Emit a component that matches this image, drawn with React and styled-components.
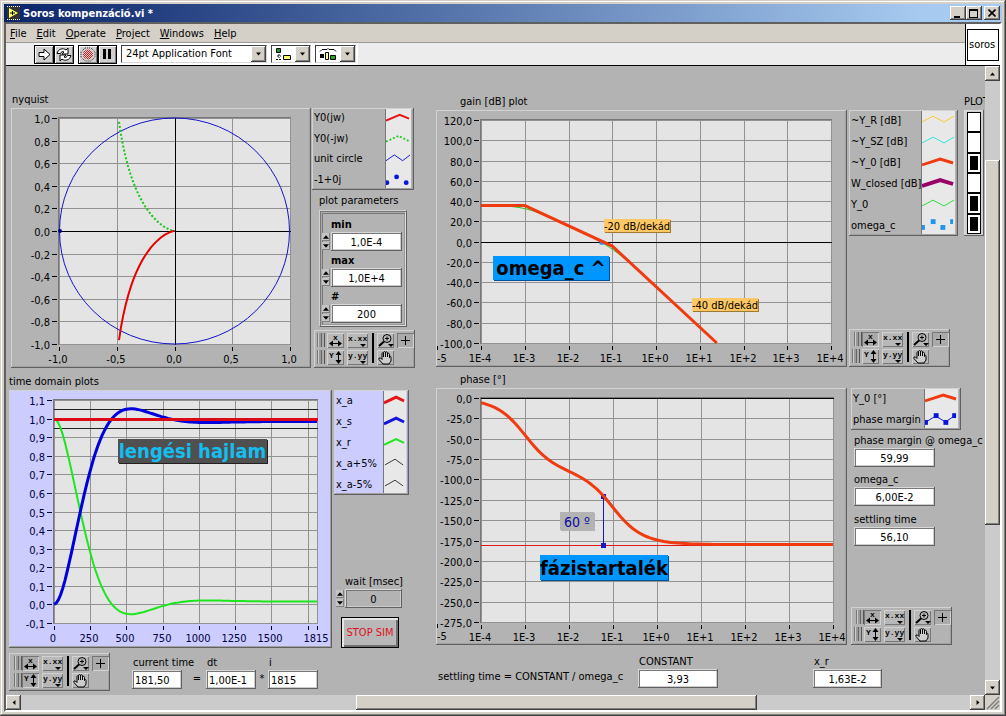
import React from "react";
import styled, { createGlobalStyle, css } from "styled-components";

const Global = createGlobalStyle`
  *, *::before, *::after { box-sizing: border-box; }
  body {
    margin: 0;
    background: #d4d0c8;
    font: 11px/14px "DejaVu Sans Condensed", "DejaVu Sans", sans-serif;
    color: #000;
  }
  button, input, select { font: inherit; color: inherit; margin: 0; padding: 0; border: 0; border-radius: 0; }
  svg { display: block; }
  svg text { font-family: "DejaVu Sans Condensed", "DejaVu Sans", sans-serif; }
`;

const raised = css`
  background: #d4d0c8;
  box-shadow: inset -1px -1px #404040, inset 1px 1px #fff, inset -2px -2px #808080;
`;
const panelBevel = css`
  box-shadow: inset -1px -1px #606060, inset 1px 1px #d2d2d2, inset -2px -2px #a0a0a0;
`;

/* ---------- window frame ---------- */

const Window = styled.div`
  min-height: 100vh;
  padding: 4px;
  display: flex;
  flex-direction: column;
  background: #d4d0c8;
  box-shadow: inset -1px -1px #404040, inset 1px 1px #d4d0c8, inset -2px -2px #808080, inset 2px 2px #fff;
`;
const TitleBar = styled.header`
  height: 18px;
  padding: 0 2px 0 3px;
  display: flex;
  align-items: center;
  gap: 3px;
  background: linear-gradient(90deg, #0a246a, #a6caf0 92%);
  color: #fff;
  font-weight: bold;
`;
const Title = styled.h1`
  flex: 1;
  margin: 0;
  padding-top: 1px;
  font: inherit;
`;
const CaptionButtons = styled.div`
  display: flex;
`;
const CaptionButton = styled.button`
  width: 16px;
  height: 14px;
  display: grid;
  place-items: center;
  margin-left: ${(p) => (p.$apart ? 2 : 0)}px;
  ${raised}
`;
const Client = styled.div`
  flex: 1;
  display: flex;
  flex-direction: column;
  border: 2px solid;
  border-color: #606060 #fff #fff #606060;
`;
const Head = styled.div`
  display: flex;
  border-bottom: 1px solid #000;
`;
const Bars = styled.div`
  flex: 1;
`;
const MenuBar = styled.nav`
  height: 19px;
  display: flex;
  align-items: flex-end;
  gap: 2px;
  border-bottom: 1px solid #9a9a9a;
`;
const MenuItem = styled.button`
  height: 17px;
  padding: 0 4px;
  background: none;
`;
const ToolBar = styled.div`
  height: 22px;
  display: flex;
  align-items: center;
  padding-left: 28px;
  gap: 4px;
  background: linear-gradient(90deg, #ececec 0 28px, #fff 28px 352px, #ececec 352px);
`;
const ToolGroup = styled.div`
  display: flex;
`;
const ToolButton = styled.button`
  width: ${(p) => p.$w || 20}px;
  height: 19px;
  display: grid;
  place-items: center;
  background: #d0d0d0;
  border: 1px solid #000;
  box-shadow: inset 1px 1px #fff, inset -1px -1px #808080;
`;
const DropFrame = styled.div`
  position: relative;
  width: ${(p) => p.$w}px;
  height: 18px;
  display: flex;
  align-items: center;
  background: #fff;
  border: 1px solid;
  border-color: #404040 #d8d8d8 #d8d8d8 #404040;
`;
const DropSelect = styled.select`
  flex: 1;
  min-width: 0;
  height: 16px;
  padding-left: 4px;
  appearance: none;
  background: none;
`;
const DropArrow = styled.span`
  width: 15px;
  height: 16px;
  display: grid;
  place-items: center;
  pointer-events: none;
  ${raised}
`;
const DropButton = styled.button`
  display: flex;
  align-items: center;
  justify-content: space-between;
  flex: 1;
  height: 16px;
  padding-left: 3px;
  background: none;
`;
const ViIconPane = styled.div`
  width: 35px;
  padding: 5px 1px 4px 1px;
  background: #fff;
  border-left: 1px solid #000;
`;
const ViIcon = styled.div`
  height: 32px;
  padding: 8px 1px 0;
  border: 1px solid #000;
`;

/* ---------- scroll bars ---------- */

const Work = styled.div`
  flex: 1;
  display: flex;
`;
const ScrollBar = styled.div`
  display: flex;
  background: #cbcbcb;
  flex-direction: ${(p) => (p.$vertical ? "column" : "row")};
  ${(p) => (p.$vertical ? "width: 15px;" : "flex: 1; height: 15px;")}
`;
const ScrollButton = styled.button`
  width: 15px;
  height: 15px;
  display: grid;
  place-items: center;
  ${raised}
`;
const Track = styled.div`
  flex: ${(p) => p.$part} 1 0;
`;
const Thumb = styled.div`
  flex: ${(p) => p.$part} 1 0;
  ${raised}
`;
const BottomBar = styled.div`
  display: flex;
`;
const Grip = styled.div`
  width: 15px;
  height: 15px;
`;

/* ---------- front panel ---------- */

const Panel = styled.main`
  flex: 1;
  min-width: 0;
  display: flex;
  background: #b3b3b3;
  overflow: hidden;
`;
const LeftHalf = styled.section`
  flex: 427 1 3px;
  min-width: 0;
  padding: 26px 0 0 3px;
`;
const RightHalf = styled.section`
  flex: 549 1 0;
  min-width: 0;
  padding-top: 28px;
`;
const GraphTitle = styled.h2`
  margin: ${(p) => p.$top || 0}px 0 0 ${(p) => p.$left || 0}px;
  font: inherit;
  height: 16px;
  line-height: 16px;
`;
const GraphRow = styled.div`
  display: flex;
  gap: ${(p) => p.$gap || 2}px;
  padding-left: ${(p) => p.$left || 0}px;
`;
const GraphBox = styled.div`
  flex: 1;
  min-width: 0;
  background: ${(p) => p.$bg || "transparent"};
  ${panelBevel}
  svg { width: 100%; height: auto; }
`;
const Side = styled.div`
  width: ${(p) => p.$w}px;
  display: flex;
  flex-direction: column;
  align-items: flex-start;
`;
const LegendBox = styled.ul`
  position: relative;
  width: ${(p) => p.$w}px;
  height: ${(p) => p.$h}px;
  margin: 0;
  padding: 0 3px 0 2px;
  display: flex;
  flex-direction: column;
  list-style: none;
  background: ${(p) => p.$bg || "transparent"};
  &::after {
    content: "";
    position: absolute;
    inset: 0;
    ${panelBevel}
  }
`;
const LegendRow = styled.li`
  flex: 1;
  display: flex;
  align-items: center;
  justify-content: space-between;
  white-space: nowrap;
`;
const Swatch = styled.svg`
  flex: none;
  align-self: stretch;
  background: #e8e8e8;
  border-left: 1px solid #777;
`;

const Field = styled.input`
  width: ${(p) => p.$w}px;
  height: 19px;
  min-width: 0;
  padding: 1px 3px 0;
  text-align: ${(p) => p.$align || "center"};
  background: ${(p) => p.$bg || "#fff"};
  box-shadow: inset -1px -1px #606060, inset 1px 1px #d8d8d8, inset 2px 2px #777, inset -2px -2px #ccc;
`;
const Labelled = styled.label`
  display: flex;
  flex-direction: column;
  white-space: nowrap;
  margin: ${(p) => p.$top || 0}px 0 0 ${(p) => p.$left || 0}px;
`;
const Caption = styled.span`
  height: 14px;
  padding-left: ${(p) => p.$left || 0}px;
  font-weight: ${(p) => (p.$bold ? "bold" : "normal")};
`;
const SpinRow = styled.div`
  display: flex;
  align-items: center;
  gap: 1px;
`;
const Spinner = styled.span`
  width: 8px;
  display: flex;
  flex-direction: column;
  gap: 1px;
`;
const SpinButton = styled.button`
  height: 8px;
  display: grid;
  place-items: center;
  background: #c4c4c4;
  box-shadow: inset -1px -1px #808080;
`;
const Cluster = styled.fieldset`
  width: 88px;
  min-width: 0;
  margin: 2px 0 0 7px;
  padding: 4px 2px 3px;
  border: 1px solid;
  border-color: #d2d2d2 #606060 #606060 #d2d2d2;
  box-shadow: inset 1px 1px #777, inset -1px -1px #ddd, inset 2px 2px #aaa, inset 3px 3px #777, inset -2px -2px #999;
`;
const ClusterItem = styled.label`
  display: flex;
  flex-direction: column;
  margin-top: 3px;
`;
const StopButton = styled.button`
  width: 58px;
  height: 31px;
  margin: 9px 0 0 7px;
  color: #e01020;
  background: #b8b8b8;
  border: 1px solid #000;
  white-space: nowrap;
  box-shadow: inset 2px 2px #e4e4e4, inset -2px -2px #707070;
`;
const PaletteBox = styled.div`
  width: 101px;
  height: 38px;
  margin-top: ${(p) => (p.$bottom ? "auto" : 0)};
  margin-left: ${(p) => p.$left || 0}px;
  padding: 3px;
  display: grid;
  grid-template-columns: 27px 22px 2px 17px 17px;
  grid-template-rows: 15px 15px;
  column-gap: 3px;
  row-gap: 2px;
  ${panelBevel}
`;
const LockPair = styled.div`
  display: flex;
  justify-content: ${(p) => (p.$locked ? "flex-end" : "space-between")};
`;
const PaletteButton = styled.button`
  width: ${(p) => p.$w || 17}px;
  height: 15px;
  grid-column: ${(p) => p.$col || "auto"};
  background: ${(p) => (p.$down ? "#aaa" : "#b8b8b8")};
  box-shadow: ${(p) =>
    p.$down
      ? "inset 1px 1px #777, inset -1px -1px #d2d2d2"
      : "inset 1px 1px #d2d2d2, inset -1px -1px #777"};
`;
const Lock = styled.button`
  width: 8px;
  height: 14px;
  background: linear-gradient(90deg, #777 0 1px, #ccc 1px 2px, #999 2px 4px, #666 4px 5px, #aaa 5px 7px, #555 7px);
`;
const Divider = styled.div`
  grid-row: 1 / 3;
  grid-column: 3;
  height: 30px;
  background: #000;
`;
const BottomRow = styled.div`
  display: flex;
  align-items: flex-start;
  padding-top: ${(p) => p.$top}px;
`;
const Sign = styled.span`
  width: ${(p) => p.$w}px;
  padding-top: 19px;
  text-align: center;
`;
const Formula = styled.p`
  width: 200px;
  margin: 0;
  padding: 15px 0 0 2px;
  white-space: nowrap;
`;
const PlotSwitches = styled.div`
  width: 20px;
  height: 126px;
  margin-left: 6px;
  padding: 2px 3px 2px;
  display: grid;
  grid-auto-rows: 1fr;
  background: #d0d0d0;
  box-shadow: inset -1px -1px #606060, inset 1px 1px #ddd;
`;
const PlotSwitch = styled.input`
  appearance: none;
  width: 14px;
  background: #fff;
  border: 1px solid #000;
  &:checked {
    background: #000;
    box-shadow: inset 0 0 0 2px #fff;
  }
`;
const SideTop = styled.div`
  display: flex;
`;
const SwitchHead = styled.div`
  position: relative;
`;
const SwitchTitle = styled.span`
  position: absolute;
  left: 6px;
  bottom: 100%;
  padding-bottom: 1px;
`;

/* ---------- plotting ---------- */

function Plot({ size, area, x, y, xTicks, yTicks, ink = "#000", zeroX, zeroY, extra, title, children }) {
  const sx = (v) => area.l + ((v - x[0]) / (x[1] - x[0])) * (area.r - area.l);
  const sy = (v) => area.b - ((v - y[0]) / (y[1] - y[0])) * (area.b - area.t);
  const px = (v) => Math.round(sx(v));
  const py = (v) => Math.round(sy(v));
  return (
    <svg viewBox={`0 0 ${size[0]} ${size[1]}`} role="img" aria-label={title}>
      <g shapeRendering="crispEdges">
        <rect x={area.l} y={area.t} width={area.r - area.l + 1} height={area.b - area.t + 1} fill="#e4e4e4" />
        <rect x={area.l - 1} y={area.t - 1} width={area.r - area.l + 2} height="1" fill="#777" />
        <rect x={area.l - 1} y={area.t - 1} width="1" height={area.b - area.t + 2} fill="#777" />
        {xTicks.map(([v]) => (
          <g key={v}>
            <rect x={px(v)} y={area.t} width="1" height={area.b - area.t + 1} fill="#929292" />
            <rect x={px(v)} y={area.b + 3} width="1" height="4" fill={ink} />
          </g>
        ))}
        {yTicks.map(([v]) => (
          <g key={v}>
            <rect x={area.l} y={py(v)} width={area.r - area.l + 1} height="1" fill="#929292" />
            <rect x={area.l - 7} y={py(v)} width="5" height="1" fill={ink} />
          </g>
        ))}
        {zeroX && <rect x={px(0)} y={area.t} width="1" height={area.b - area.t + 1} fill="#000" />}
        {zeroY && <rect x={area.l} y={py(0)} width={area.r - area.l + 1} height="1" fill="#000" />}
      </g>
      <g fontSize="11" fill={ink}>
        {xTicks.map(([v, t]) => (
          <text key={v} x={px(v) - 1} y={area.b + 19} textAnchor="middle">{t}</text>
        ))}
        {yTicks.map(([v, t]) => (
          <text key={v} x={area.l - 9} y={py(v) + 5} textAnchor="end">{t}</text>
        ))}
        {extra}
      </g>
      {children(sx, sy)}
    </svg>
  );
}

const comma = (v, d = 1) => v.toFixed(d).replace(".", ",");
const range = (from, to, n) => Array.from({ length: n + 1 }, (_, i) => from + ((to - from) * i) / n);
const line = (values, fx, fy) => values.map((v) => `${fx(v).toFixed(1)},${fy(v).toFixed(1)}`).join(" ");

const K = 60;
const W1 = 0.001;
const W2 = 0.1;
const WC = 0.06;

const decades = (...labels) => labels.map((n) => [n, `1E${n < 0 ? "-" : "+"}${Math.abs(n)}`]);
const logTicks = decades(-4, -3, -2, -1, 0, 1, 2, 3, 4);

function Nyquist() {
  const ws = range(-1.34, 2, 90).map((e) => 10 ** e);
  const re = (w) => -(WC / W2) / (1 + (w / W2) ** 2);
  const im = (w) => -WC / (w * (1 + (w / W2) ** 2));
  const shown = ws.filter((w) => im(w) > -1.01);
  return (
    <Plot
      title="nyquist"
      size={[300, 260]}
      area={{ l: 48, r: 279, t: 10, b: 236 }}
      x={[-1, 1]}
      y={[-1, 1]}
      xTicks={[-1, -0.5, 0, 0.5, 1].map((v) => [v, comma(v)])}
      yTicks={range(-10, 10, 10).map((v) => [v / 10, comma(v / 10)])}
      zeroX
      zeroY
    >
      {(sx, sy) => (
        <g fill="none">
          <ellipse cx={sx(0)} cy={sy(0)} rx="115" ry="113" stroke="#1414c8" />
          <circle cx={sx(-1) + 1} cy={sy(0)} r="2" fill="#00008b" />
          <polyline points={line(shown, (w) => sx(re(w)), (w) => sy(-im(w)))} stroke="#14c814" strokeWidth="2" strokeDasharray="2 2" />
          <polyline points={line(shown, (w) => sx(re(w)), (w) => sy(im(w)))} stroke="#e60000" strokeWidth="2" />
        </g>
      )}
    </Plot>
  );
}

function Note({ x, y, w, h, fill, edge, color = "#000", size, bold, base, children }) {
  return (
    <g>
      <rect x={x + 1} y={y + 1} width={w} height={h} fill={edge} />
      <rect x={x} y={y} width={w} height={h} fill={fill} />
      <text x={x + w / 2} y={y + base} textAnchor="middle" fontSize={size} fontWeight={bold ? "bold" : "normal"} fill={color}>
        {children}
      </text>
    </g>
  );
}

const minusFive = (
  <>
    <rect x="1" y="236" width="1" height="4" />
    <text x="1" y="252">-5</text>
  </>
);

function Gain() {
  const asym = [[-4, 35.6], [-3, 35.6], [-1, -4.4], [1.39, -100]];
  const exact = (e) => 20 * Math.log10(K / Math.hypot(1, 10 ** e / W1) / Math.hypot(1, 10 ** e / W2));
  return (
    <Plot
      title="gain [dB] plot"
      size={[411, 257]}
      area={{ l: 45, r: 395, t: 10, b: 233 }}
      x={[-4, 4]}
      y={[-100, 120]}
      xTicks={logTicks}
      yTicks={range(-100, 120, 11).map((v) => [v, comma(v)])}
      zeroY
      extra={minusFive}
    >
      {(sx, sy) => (
        <>
          <polyline fill="none" stroke="#22c822" points={line(range(-4, 1.35, 60), sx, (e) => sy(exact(e)))} />
          <rect x={sx(Math.log10(WC)) - 3} y={sy(0) - 1} width="5" height="4" fill="#1e90ff" />
          <polyline fill="none" stroke="#f03a10" strokeWidth="3" points={line(asym, (p) => sx(p[0]), (p) => sy(p[1]))} />
          <Note x={168} y={109} w={66} h={13} base={11} fill="#ffc864" edge="#a07830" size="11">-20 dB/dekád</Note>
          <Note x={256} y={188} w={66} h={13} base={11} fill="#ffc864" edge="#a07830" size="11">-40 dB/dekád</Note>
          <Note x={57} y={146} w={116} h={24} base={19} fill="#0096ff" edge="#0050a0" size="20" bold>omega_c ^</Note>
        </>
      )}
    </Plot>
  );
}

function Phase() {
  const deg = 180 / Math.PI;
  const phase = (e) => -deg * (Math.atan(10 ** e / W1) + Math.atan(10 ** e / W2));
  return (
    <Plot
      title="phase [°]"
      size={[411, 257]}
      area={{ l: 45, r: 397, t: 10, b: 234 }}
      x={[-4, 4]}
      y={[-275, 0]}
      xTicks={logTicks}
      yTicks={range(-275, 0, 11).map((v) => [v, comma(v)])}
      zeroY
      extra={minusFive}
    >
      {(sx, sy) => {
        const xm = Math.round(sx(Math.log10(WC)));
        return (
          <>
            <rect x={sx(-4)} y={Math.round(sy(-180))} width={sx(4) - sx(-4)} height="1" fill="#e61414" />
            <rect x={xm} y={sy(-120)} width="1" height={sy(-180) - sy(-120)} fill="#1414c8" />
            <rect x={xm - 2} y={Math.round(sy(-120)) - 2} width="5" height="5" fill="#1414c8" />
            <polyline fill="none" stroke="#f03a10" strokeWidth="3" points={line(range(-4, 4, 100), sx, (e) => sy(phase(e)))} />
            <rect x={xm - 2} y={Math.round(sy(-180)) - 2} width="5" height="5" fill="#1414c8" />
            <Note x={124} y={124} w={34} h={18} base={15} fill="#b3b3b3" edge="#b3b3b3" color="#0a0aa0" size="14">60 º</Note>
            <Note x={104} y={167} w={128} h={25} base={20} fill="#0096ff" edge="#0050a0" size="20" bold>fázistartalék</Note>
          </>
        );
      }}
    </Plot>
  );
}

function TimeDomain() {
  const wn = Math.sqrt(WC * W2);
  const z = W2 / 2 / wn;
  const wd = wn * Math.sqrt(1 - z * z);
  const out = (i) => {
    const t = i / 10;
    return (K / (K + 1)) * (1 - Math.exp(-z * wn * t) * (Math.cos(wd * t) + ((z * wn) / wd) * Math.sin(wd * t)));
  };
  const is = range(0, 1815, 120);
  return (
    <Plot
      title="time domain plots"
      ink="#000040"
      size={[323, 258]}
      area={{ l: 45, r: 308, t: 10, b: 233 }}
      x={[0, 1815]}
      y={[-0.1, 1.1]}
      xTicks={[[0, "0"], [250, "250"], [500, "500"], [750, "750"], [1000, "1000"], [1250, "1250"], [1500, "1500"], [1750, ""], [1815, "1815"]]}
      yTicks={range(-1, 11, 12).map((v) => [v / 10, comma(v / 10)])}
    >
      {(sx, sy) => (
        <g fill="none">
          <rect x="45" y={Math.round(sy(1.05))} width="264" height="1" fill="#222" />
          <rect x="45" y={Math.round(sy(0.95))} width="264" height="1" fill="#222" />
          <polyline stroke="#1ee61e" strokeWidth="2" points={line(is, sx, (i) => sy(1 - out(i)))} />
          <polyline stroke="#0000dc" strokeWidth="3" points={line(is, sx, (i) => sy(out(i)))} />
          <rect x="45" y={Math.round(sy(1)) - 1} width="264" height="3" fill="#dc0a14" />
          <Note x={109} y={49} w={149} h={24} base={19} fill="#505050" edge="#202020" color="#14bef0" size="20" bold>lengési hajlam</Note>
        </g>
      )}
    </Plot>
  );
}

/* ---------- small parts ---------- */

const arrows = { up: "M0 4h7L3.500 0z", down: "M0 0h7L3.500 4z", left: "M4 0v7L0 3.500z", right: "M0 0v7L4 3.500z" };
const Arrow = ({ dir, s = 7 }) => {
  const flat = dir === "up" || dir === "down";
  return (
    <svg width={flat ? s : 4} height={flat ? 4 : s} viewBox={flat ? "0 0 7 4" : "0 0 4 7"}>
      <path d={arrows[dir]} />
    </svg>
  );
};

function Legend({ w, h, sw, bg, items }) {
  return (
    <LegendBox $w={w} $h={h} $bg={bg}>
      {items.map(([name, kind, color, weight]) => (
        <LegendRow key={name}>
          {name}
          <Swatch width={sw} viewBox={`0 0 ${sw} 21`}>
            {kind === "peak" && <polyline points={`0,13 ${sw * 0.55},7 ${sw - 2},11`} fill="none" stroke={color} strokeWidth={weight} />}
            {kind === "dash" && <polyline points={`0,13 ${sw * 0.5},7 ${sw - 1},13`} fill="none" stroke={color} strokeWidth={weight} strokeDasharray="2 2" />}
            {kind === "wave" && <polyline points={`0,12 ${sw / 3},6 ${(sw * 2) / 3},12 ${sw - 1},6`} fill="none" stroke={color} strokeWidth={weight} />}
            {kind === "tent" && <polyline points={`1,12 ${sw / 2},6 ${sw - 3},12`} fill="none" stroke={color} strokeWidth={weight} />}
            {kind === "dots" && (
              <g fill={color}>
                <circle cx="1" cy="13" r="2.500" />
                <circle cx="11" cy="7" r="2.500" />
                <circle cx="21" cy="13" r="2.500" />
              </g>
            )}
            {kind === "squares" && (
              <g fill={color}>
                <rect x="0" y="10" width="3" height="5" />
                <rect x="9" y="4" width="5" height="5" />
                <rect x="19" y="10" width="5" height="5" />
                <rect x="29" y="4" width="3" height="5" />
              </g>
            )}
            {kind === "linked" && (
              <g fill={color}>
                <polyline points="1,13 11,7 21,13 30,7" fill="none" stroke={color} />
                <rect x="0" y="11" width="3" height="5" />
                <rect x="9" y="4" width="5" height="5" />
                <rect x="19" y="11" width="5" height="5" />
                <rect x="28" y="4" width="4" height="5" />
              </g>
            )}
          </Swatch>
        </LegendRow>
      ))}
    </LegendBox>
  );
}

const Glyph = styled.text`
  && {
    font-family: "Liberation Mono", monospace;
    font-size: 8px;
    font-weight: bold;
  }
`;

function Palette({ lockX, lockY, bottom, left }) {
  return (
    <PaletteBox $bottom={bottom} $left={left}>
      <LockPair $locked={lockX}>
        <Lock aria-label="lock x" />
        <PaletteButton $down={lockX} aria-label="autoscale x">
          <svg width="17" height="15">
            <Glyph x="6" y="7">x</Glyph>
            <path d="M4 10.500h9" stroke="#000" />
            <path d="M2 10.500l4-3v6zM15 10.500l-4-3v6z" />
          </svg>
        </PaletteButton>
      </LockPair>
      <PaletteButton $w={21} aria-label="x format">
        <svg width="21" height="15">
          <Glyph x="1" y="8">x.xx</Glyph>
          <path d="M13 11h6l-3 3z" />
        </svg>
      </PaletteButton>
      <Divider />
      <PaletteButton aria-label="zoom">
        <svg width="17" height="15" fill="none" stroke="#000">
          <circle cx="10" cy="5.500" r="4" />
          <path d="M10 3.500v4M8 5.500h4" />
          <path d="M7 8.500L2 13" strokeWidth="2" />
          <path d="M11 11h6l-3 3z" fill="#000" stroke="none" />
        </svg>
      </PaletteButton>
      <PaletteButton $down aria-label="cursor">
        <svg width="17" height="15" shapeRendering="crispEdges">
          <path d="M4 7h9v1H4zM8 3h1v9H8z" />
        </svg>
      </PaletteButton>
      <LockPair $locked={lockY}>
        <Lock aria-label="lock y" />
        <PaletteButton $down={lockY} aria-label="autoscale y">
          <svg width="17" height="15">
            <Glyph x="2" y="8">Y</Glyph>
            <path d="M11.500 4v7" stroke="#000" />
            <path d="M11.500 1l-3 4h6zM11.500 14l-3-4h6z" />
          </svg>
        </PaletteButton>
      </LockPair>
      <PaletteButton $w={21} aria-label="y format">
        <svg width="21" height="15">
          <Glyph x="1" y="8">y.yy</Glyph>
          <path d="M13 11h6l-3 3z" />
        </svg>
      </PaletteButton>
      <PaletteButton $col={4} aria-label="pan">
        <svg width="17" height="15" fill="#ccc" stroke="#000">
          <path d="M6 14L2 9.500V8h1.500L5 9.500V3.500C5 2.500 6.500 2.500 6.500 3.500V7V2.500C6.500 1.300 8.500 1.300 8.500 2.500V7V2.500C8.500 1.500 10.500 1.500 10.500 3V7V4C10.500 3 12.500 3 12.500 4.500V7.500C12.500 6 14 6 14 7.500V11L12 14z" />
        </svg>
      </PaletteButton>
    </PaletteBox>
  );
}

function Spin({ label, value, w, bg }) {
  return (
    <SpinRow>
      <Spinner>
        <SpinButton type="button" aria-label={`${label} up`}><Arrow dir="up" s={6} /></SpinButton>
        <SpinButton type="button" aria-label={`${label} down`}><Arrow dir="down" s={6} /></SpinButton>
      </Spinner>
      <Field $w={w} $bg={bg} defaultValue={value} aria-label={label} />
    </SpinRow>
  );
}

function Readout({ label, value, w, top, left, align, inset = 1 }) {
  return (
    <Labelled $top={top} $left={left}>
      <Caption $left={inset}>{label}</Caption>
      <Field $w={w} $align={align} defaultValue={value} />
    </Labelled>
  );
}

const CalcRow = styled.div`
  display: grid;
  grid-template-columns: 60px 14px 50px 12px 50px;
  margin-left: 22px;
`;

const menus = ["File", "Edit", "Operate", "Project", "Windows", "Help"];

export default function App() {
  return (
    <>
      <Global />
      <Window>
        <TitleBar>
          <svg width="13" height="14" viewBox="0 0 13 14">
            <rect width="13" height="14" fill="#333" />
            <path d="M0 .5h13M0 13.500h13" stroke="#ffe" strokeDasharray="1 1" />
            <path d="M2 2l9 5-9 5z" fill="#ffff64" />
            <path d="M3 7h5M5.500 5v4" stroke="#000" />
          </svg>
          <Title>Soros kompenzáció.vi *</Title>
          <CaptionButtons>
            <CaptionButton aria-label="Minimize"><svg width="10" height="9"><path d="M1 7h6v2H1z" /></svg></CaptionButton>
            <CaptionButton aria-label="Maximize"><svg width="10" height="9" shapeRendering="crispEdges"><path fillRule="evenodd" d="M0 0h9v9H0zM1 2h7v6H1z" /></svg></CaptionButton>
            <CaptionButton $apart aria-label="Close"><svg width="8" height="8" stroke="#000" strokeWidth="1.600"><path d="M.5.5l7 7M7.500.5l-7 7" /></svg></CaptionButton>
          </CaptionButtons>
        </TitleBar>
        <Client>
          <Head>
            <Bars>
              <MenuBar>
                {menus.map((m) => (
                  <MenuItem key={m}><u>{m[0]}</u>{m.slice(1)}</MenuItem>
                ))}
              </MenuBar>
              <ToolBar>
                <ToolGroup>
                  <ToolButton aria-label="Run">
                    <svg width="13" height="13" fill="#fff" stroke="#000"><path d="M1 4.500h5V1l6 5.500L6 12V8.500H1z" /></svg>
                  </ToolButton>
                  <ToolButton aria-label="Run continuously">
                    <svg width="16" height="15" fill="#fff" stroke="#000">
                      <path d="M1 6.500C2 2 7 .5 10 3l2-2v6H6l2-2C6.500 4 5 5 4.500 6.500z" />
                      <path d="M15 8.500C14 13 9 14.500 6 12l-2 2V8h6l-2 2c1.500 1 3 0 3.500-1.500z" />
                    </svg>
                  </ToolButton>
                </ToolGroup>
                <ToolGroup>
                  <ToolButton aria-label="Abort">
                    <svg width="16" height="15">
                      <defs>
                        <pattern id="dither" width="2" height="2" patternUnits="userSpaceOnUse">
                          <rect width="2" height="2" fill="#f0c8c8" />
                          <rect width="1" height="1" fill="#b42828" />
                          <rect x="1" y="1" width="1" height="1" fill="#b42828" />
                        </pattern>
                      </defs>
                      <path d="M5 1h6l4 4v5l-4 4H5l-4-4V5z" fill="none" stroke="#333" strokeDasharray="1 1" />
                      <circle cx="8" cy="7.500" r="5" fill="url(#dither)" />
                    </svg>
                  </ToolButton>
                  <ToolButton $w={19} aria-label="Pause">
                    <svg width="9" height="10"><path d="M0 0h3v10H0zM5 0h3v10H5z" /></svg>
                  </ToolButton>
                </ToolGroup>
                <DropFrame $w={146}>
                  <DropSelect aria-label="Text settings"><option>24pt Application Font</option></DropSelect>
                  <DropArrow><Arrow dir="down" s={5} /></DropArrow>
                </DropFrame>
                <DropFrame $w={40}>
                  <DropButton aria-label="Align objects">
                    <svg width="17" height="14">
                      <path d="M1.500 1.500h4v4h-4z" fill="#1e961e" stroke="#000" />
                      <path d="M8.500 8.500h7v4h-7z" fill="#ffff64" stroke="#000" />
                      <path d="M4 7v4M2 9h4M1 12.500h6" stroke="#000" strokeDasharray="2 1" />
                    </svg>
                    <DropArrow><Arrow dir="down" s={5} /></DropArrow>
                  </DropButton>
                </DropFrame>
                <DropFrame $w={41}>
                  <DropButton aria-label="Distribute objects">
                    <svg width="18" height="14">
                      <path d="M1 4.500l2-2h5l1-1 1 1h5l2 2" fill="none" stroke="#000" />
                      <path d="M1 7h4v4H1z" />
                      <path d="M6.500 5.500h3v7h-3z" fill="#ffff96" stroke="#000" />
                      <path d="M11.500 8.500h5v4h-5z" fill="#1eaa1e" stroke="#000" />
                    </svg>
                    <DropArrow><Arrow dir="down" s={5} /></DropArrow>
                  </DropButton>
                </DropFrame>
              </ToolBar>
            </Bars>
            <ViIconPane><ViIcon>soros</ViIcon></ViIconPane>
          </Head>
          <Work>
            <Panel>
              <LeftHalf>
                <GraphTitle $left={3}>nyquist</GraphTitle>
                <GraphRow $gap={1} $left={2}>
                  <GraphBox><Nyquist /></GraphBox>
                  <Side $w={124}>
                    <Legend
                      w={102}
                      h={82}
                      sw={26}
                      items={[
                        ["Y0(jw)", "peak", "#e61414", 2],
                        ["Y0(-jw)", "dash", "#28c828", 2],
                        ["unit circle", "wave", "#1414dc", 1],
                        ["-1+0j", "dots", "#0a14dc"],
                      ]}
                    />
                    <Labelled as="span" $top={4} $left={7}>plot parameters</Labelled>
                    <Cluster aria-label="plot parameters">
                      {[["min", "1,0E-4"], ["max", "1,0E+4"], ["#", "200"]].map(([n, v]) => (
                        <ClusterItem key={n}>
                          <Caption $bold $left={9}>{n}</Caption>
                          <Spin label={n} value={v} w={71} />
                        </ClusterItem>
                      ))}
                    </Cluster>
                    <Palette bottom left={2} />
                  </Side>
                </GraphRow>
                <GraphTitle $top={6}>time domain plots</GraphTitle>
                <GraphRow $gap={2}>
                  <GraphBox $bg="#ccccff"><TimeDomain /></GraphBox>
                  <Side $w={102}>
                    <Legend
                      w={75}
                      h={105}
                      sw={23}
                      bg="#ccccff"
                      items={[
                        ["x_a", "peak", "#e61414", 3],
                        ["x_s", "peak", "#1414dc", 3],
                        ["x_r", "peak", "#1ee61e", 2],
                        ["x_a+5%", "tent", "#333", 1],
                        ["x_a-5%", "tent", "#333", 1],
                      ]}
                    />
                    <Labelled as="div" $top={80} $left={2}>
                      <Caption $left={9}>wait [msec]</Caption>
                      <Spin label="wait [msec]" value="0" w={57} bg="#b3b3b3" />
                    </Labelled>
                    <StopButton>STOP SIM</StopButton>
                  </Side>
                </GraphRow>
                <BottomRow $top={5}>
                  <Palette lockX lockY />
                  <CalcRow>
                    <Readout label="current time" value="181,50" w={50} top={3} align="left" />
                    <Sign $w={10}>=</Sign>
                    <Readout label="dt" value="1,00E-1" w={50} top={3} align="left" />
                    <Sign $w={12}>*</Sign>
                    <Readout label="i" value="1815" w={50} top={3} align="left" />
                  </CalcRow>
                </BottomRow>
              </LeftHalf>
              <RightHalf>
                <GraphTitle $left={24}>gain [dB] plot</GraphTitle>
                <GraphRow $gap={2}>
                  <GraphBox><Gain /></GraphBox>
                  <Side $w={136}>
                    <SideTop>
                      <Legend
                        w={109}
                        h={126}
                        sw={34}
                        items={[
                          ["~Y_R [dB]", "wave", "#ffc832", 1],
                          ["~Y_SZ [dB]", "wave", "#28e6dc", 1],
                          ["~Y_0 [dB]", "peak", "#f03a10", 3],
                          ["W_closed [dB]", "peak", "#960064", 4],
                          ["Y_0", "wave", "#28dc3c", 1],
                          ["omega_c", "squares", "#1e96f0"],
                        ]}
                      />
                      <SwitchHead>
                        <SwitchTitle>PLOT</SwitchTitle>
                        <PlotSwitches>
                          {[false, false, true, false, true, true].map((on, i) => (
                            <PlotSwitch key={i} type="checkbox" defaultChecked={on} aria-label={`plot ${i + 1}`} />
                          ))}
                        </PlotSwitches>
                      </SwitchHead>
                    </SideTop>
                    <Palette lockX bottom />
                  </Side>
                </GraphRow>
                <GraphTitle $top={5} $left={24}>phase [°]</GraphTitle>
                <GraphRow $gap={4}>
                  <GraphBox><Phase /></GraphBox>
                  <Side $w={134}>
                    <Legend
                      w={110}
                      h={42}
                      sw={34}
                      items={[
                        ["Y_0 [°]", "peak", "#f03a10", 3],
                        ["phase margin", "linked", "#0a14dc"],
                      ]}
                    />
                    <Readout label="phase margin @ omega_c" value="59,99" w={81} top={4} left={3} inset={0} />
                    <Readout label="omega_c" value="6,00E-2" w={81} top={6} left={3} inset={0} />
                    <Readout label="settling time" value="56,10" w={81} top={7} left={3} inset={0} />
                    <Palette lockX bottom />
                  </Side>
                </GraphRow>
                <BottomRow $top={10}>
                  <Formula>settling time = CONSTANT / omega_c</Formula>
                  <Readout label="CONSTANT" value="3,93" w={80} left={2} />
                  <Readout label="x_r" value="1,63E-2" w={69} left={95} />
                </BottomRow>
              </RightHalf>
            </Panel>
            <ScrollBar $vertical>
              <ScrollButton aria-label="Scroll up"><Arrow dir="up" s={5} /></ScrollButton>
              <Track $part={79} />
              <Thumb $part={366} />
              <Track $part={155} />
              <ScrollButton aria-label="Scroll down"><Arrow dir="down" s={5} /></ScrollButton>
            </ScrollBar>
          </Work>
          <BottomBar>
            <ScrollBar>
              <ScrollButton aria-label="Scroll left"><Arrow dir="left" s={5} /></ScrollButton>
              <Track $part={335} />
              <Thumb $part={401} />
              <Track $part={213} />
              <ScrollButton aria-label="Scroll right"><Arrow dir="right" s={5} /></ScrollButton>
            </ScrollBar>
            <Grip>
              <svg width="15" height="15" stroke="#808080"><path d="M2 14L14 2M6 14l8-8M10 14l4-4" strokeWidth="1.500" /></svg>
            </Grip>
          </BottomBar>
        </Client>
      </Window>
    </>
  );
}
